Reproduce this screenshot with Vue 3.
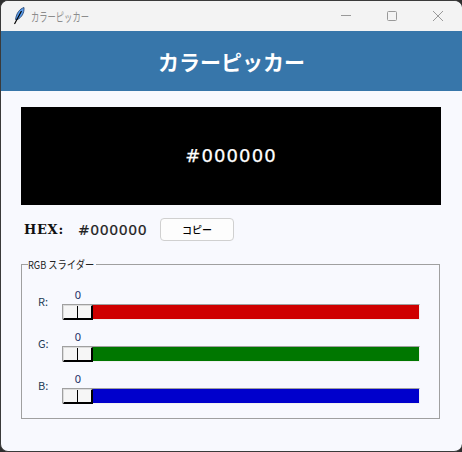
<script setup>
const sliders = [
  { label: 'R:', value: 0, color: '#cf0000' },
  { label: 'G:', value: 0, color: '#007700' },
  { label: 'B:', value: 0, color: '#0000cc' },
]
</script>

<template>
  <div class="window">
    <div class="titlebar">
      <svg class="app-icon" width="16" height="20" viewBox="0 0 16 20">
        <path d="M13 1.5C8.5 3 5.5 7 4.5 13.5L6.5 13.5C10.5 11.5 13.5 7 13 1.5Z" fill="#5a9cec" stroke="#1b3a66" stroke-width="0.8" />
        <path d="M10.5 5L3.5 18" stroke="#000" stroke-width="1.2" fill="none" />
      </svg>
      <span class="title-text">カラーピッカー</span>
      <div class="controls">
        <svg width="12" height="12" viewBox="0 0 12 12"><path d="M1 5.5H11" stroke="#999" stroke-width="1" /></svg>
        <svg width="12" height="12" viewBox="0 0 12 12"><rect x="1.5" y="1.5" width="9" height="9" rx="1" fill="none" stroke="#999" stroke-width="1" /></svg>
        <svg width="12" height="12" viewBox="0 0 12 12"><path d="M1 1L11 11M11 1L1 11" stroke="#999" stroke-width="1" /></svg>
      </div>
    </div>
    <header class="banner">カラーピッカー</header>
    <main class="body">
      <div class="preview">#000000</div>
      <div class="hex-row">
        <span class="hex-label">HEX:</span>
        <span class="hex-value">#000000</span>
        <button class="copy">コピー</button>
      </div>
      <fieldset class="group">
        <legend><span class="legend-text">RGB スライダー</span></legend>
        <div v-for="s in sliders" :key="s.label" class="row">
          <span class="label">{{ s.label }}</span>
          <div class="scale">
            <span class="num">{{ s.value }}</span>
            <div class="trough" :style="{ background: s.color }">
              <div class="thumb"><i></i></div>
            </div>
          </div>
        </div>
      </fieldset>
    </main>
  </div>
</template>

<style>
html, body { margin: 0; background: #2e2e2e; }
</style>

<style scoped>
.window {
  width: 462px;
  height: 452px;
  box-sizing: border-box;
  background: #f8f9fe;
  border-radius: 8px;
  overflow: hidden;
  display: flex;
  flex-direction: column;
  font-family: "Noto Sans CJK JP", "Noto Sans", sans-serif;
  border-top: 1px solid #3a3a3a;
  border-left: 1px solid #3a3a3a;
  border-bottom: 1px solid #3a3a3a;
}
.titlebar {
  height: 30px;
  flex: none;
  background: #f3f3f3;
  display: flex;
  align-items: center;
  padding-left: 10px;
}
.app-icon { flex: none; }
.title-text {
  margin-left: 4px;
  font-size: 12px;
  color: #8c8c8c;
  transform: scaleX(0.69);
  transform-origin: left center;
}
.controls {
  margin-left: auto;
  display: flex;
  gap: 34px;
  padding-right: 18px;
  align-items: center;
}
.controls svg { display: block; }
.banner {
  height: 60px;
  flex: none;
  background: #3776aa;
  color: #fff;
  font-size: 21px;
  font-weight: 700;
  display: flex;
  align-items: center;
  justify-content: center;
}
.body {
  flex: 1;
  padding: 16px 20px 0 20px;
  display: flex;
  flex-direction: column;
}
.preview {
  width: 420px;
  height: 98px;
  box-sizing: border-box;
  padding-bottom: 2px;
  background: #000;
  color: #fff;
  font-family: "DejaVu Sans", sans-serif;
  font-size: 18px;
  letter-spacing: 1.1px;
  -webkit-text-stroke: 0.25px #fff;
  display: flex;
  align-items: center;
  justify-content: center;
}
.hex-row {
  display: flex;
  align-items: center;
  height: 23px;
  margin-top: 13px;
}
.hex-label {
  margin-left: 3px;
  font-family: "DejaVu Serif", serif;
  font-weight: 700;
  font-size: 13px;
  letter-spacing: 0.7px;
  color: #111;
  width: 54px;
}
.hex-value {
  font-family: "DejaVu Sans", sans-serif;
  font-size: 14px;
  letter-spacing: 0.6px;
  -webkit-text-stroke: 0.2px #222;
  color: #222;
  width: 82px;
}
.copy {
  width: 74px;
  height: 23px;
  padding: 0;
  background: #fdfdfd;
  border: 1px solid #d0d0d0;
  border-radius: 4px;
  font-family: "Noto Sans CJK JP", sans-serif;
  font-size: 10px;
  font-weight: 500;
  color: #000;
}
.group {
  margin: 17px 0 0 0;
  padding: 0;
  width: 419px;
  height: 161px;
  box-sizing: border-box;
  border: 1px solid #a0a0a0;
}
.group legend {
  margin-left: 6px;
  padding: 0;
  width: 68px;
  font-size: 11px;
  line-height: 12px;
  color: #222;
  white-space: nowrap;
}
.legend-text {
  display: inline-block;
  transform: scaleX(0.84);
  transform-origin: left center;
}
.row {
  display: flex;
  align-items: flex-end;
  height: 42px;
  padding-left: 15px;
}
.row:first-of-type { margin-top: 8px; }
.label {
  width: 24px;
  margin-left: 1px;
  font-size: 11px;
  line-height: 14px;
  color: #223a55;
  margin-bottom: 12px;
}
.scale { width: 358px; display: flex; flex-direction: column; }
.num {
  width: 32px;
  text-align: center;
  font-family: "Noto Sans", sans-serif;
  font-size: 11px;
  line-height: 14px;
  margin-bottom: 2px;
  color: #1b2f66;
}
.trough {
  height: 16px;
  box-sizing: border-box;
  border: 1px solid #f0f0f0;
  border-top-color: #a0a0a0;
  border-left-color: #a0a0a0;
}
.thumb {
  width: 30px;
  height: 15px;
  box-sizing: border-box;
  background: #f6f6f6;
  border-top: 1px solid #dcdcdc;
  border-left: 1px solid #dcdcdc;
  border-right: 2px solid #000;
  border-bottom: 2px solid #000;
  display: flex;
  justify-content: center;
}
.thumb i {
  width: 1px;
  height: 100%;
  background: #000;
  display: block;
}
</style>
